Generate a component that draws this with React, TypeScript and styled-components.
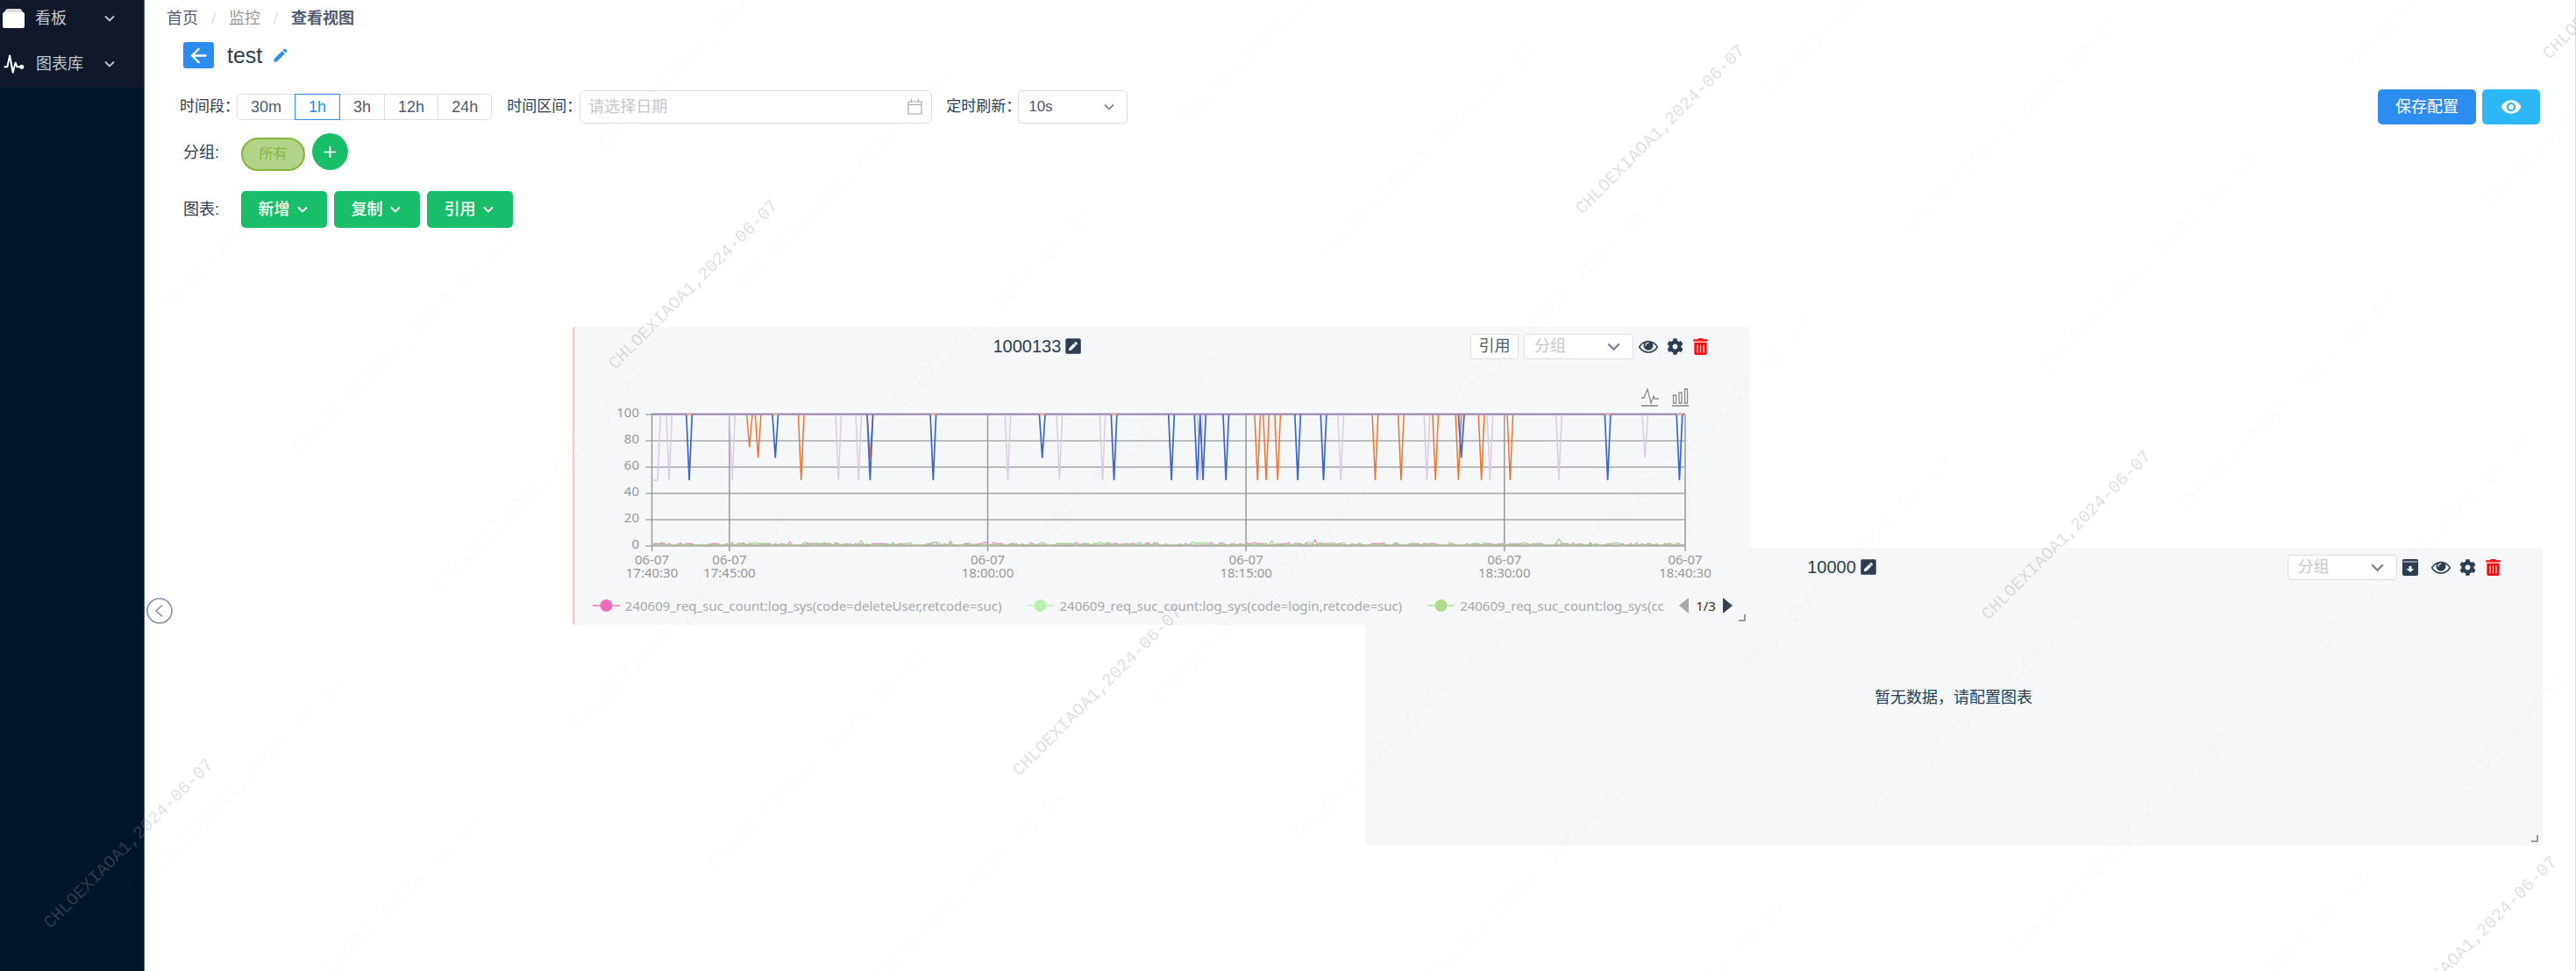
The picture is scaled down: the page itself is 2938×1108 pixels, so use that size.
import React from "react";
import styled, { createGlobalStyle } from "styled-components";
import { IoMdAdd, IoMdArrowBack, IoMdEye, IoMdPulse } from "react-icons/io";
import { MdEdit } from "react-icons/md";
import { FaCog, FaPenSquare, FaTrashAlt } from "react-icons/fa";

const ink = "#2c3e50";
const blue = "#2d8cf0";
const green = "#19be6b";
const line = "#dcdee2";

const GlobalStyle = createGlobalStyle`
  * { box-sizing: border-box; }
  body {
    margin: 0;
    background: #fff;
    color: ${ink};
    font: 18px/24px "Liberation Sans", "Noto Sans CJK SC", sans-serif;
  }
  button, input, select { font: inherit; color: inherit; margin: 0; }
  button { cursor: pointer; }
  svg { display: block; flex: none; }
`;

const Page = styled.div`
  display: flex;
  min-height: 100vh;
  border-right: 1px solid #dcdcdc;
`;

const Sidebar = styled.nav`
  width: 165px;
  flex: none;
  background: #001529;
  border-right: 1px solid #4c6070;
`;

const MenuList = styled.ul`
  margin: 0;
  padding: 0;
  list-style: none;
  background: #101829;
`;

const MenuItem = styled.button`
  display: flex;
  align-items: center;
  width: 100%;
  height: ${(p: { $tall?: boolean }) => (p.$tall ? 58 : 42)}px;
  padding: ${(p: { $tall?: boolean }) => (p.$tall ? 4 : 0)}px 33px 0 3px;
  border: 0;
  background: none;
  color: #c3c6cb;
  gap: 12px;
  text-align: left;
`;

const Grow = styled.span`
  flex: 1;
  white-space: nowrap;
`;

const Main = styled.main`
  position: relative;
  display: flex;
  flex: 1;
  min-width: 0;
  flex-direction: column;
`;

const Breadcrumb = styled.nav`
  display: flex;
  align-items: center;
  height: 40px;
  padding: 2px 0 0 25px;
  gap: 15px;
`;

const Crumb = styled.a`
  color: ${(p: { $muted?: boolean }) => (p.$muted ? "#999" : "#515a6e")};
  text-decoration: none;
`;

const Current = styled.span`
  color: #515a6e;
  font-weight: 700;
`;

const Slash = styled.span`
  color: ${line};
`;

const TitleRow = styled.div`
  display: flex;
  align-items: center;
  height: 48px;
  padding: 0 0 2px 44px;
`;

const BackButton = styled.button`
  display: grid;
  place-items: center;
  width: 35px;
  height: 30px;
  padding: 0;
  border: 0;
  border-radius: 3px;
  background: ${blue};
  color: #fff;
`;

const PageTitle = styled.h1`
  margin: 0 11px 0 15px;
  font-size: 25px;
  font-weight: 400;
  line-height: 30px;
`;

const IconButton = styled.button`
  display: grid;
  place-items: center;
  padding: 0;
  border: 0;
  background: none;
  color: ${(p: { $color?: string }) => p.$color || ink};
`;

const ArchiveButton = styled(IconButton)`
  margin-right: 5px;
`;

const Toolbar = styled.div`
  display: flex;
  align-items: center;
  padding: 14px 40px 10px 40px;
`;

const Label = styled.label`
  font-size: 17px;
  white-space: nowrap;
`;

const ButtonGroup = styled.div`
  display: flex;
  margin: 0 17px 0 -2px;
`;

const RangeButton = styled.button`
  position: relative;
  z-index: ${(p: { $active?: boolean }) => (p.$active ? 1 : 0)};
  height: 30px;
  margin-left: -1px;
  padding: 0 15px;
  border: 1px solid ${(p: { $active?: boolean }) => (p.$active ? blue : line)};
  background: #fff;
  color: ${(p: { $active?: boolean }) => (p.$active ? blue : "#515a6e")};
  line-height: 28px;
  &:first-child { border-radius: 4px 0 0 4px; }
  &:last-child { border-radius: 0 4px 4px 0; }
`;

const DateField = styled.div`
  display: flex;
  align-items: center;
  width: 402px;
  height: 38px;
  margin: 0 16px 0 -2px;
  padding: 0 10px 0 9px;
  border: 1px solid ${line};
  border-radius: 5px;
`;

const DateInput = styled.input`
  flex: 1;
  min-width: 0;
  border: 0;
  padding: 0;
  outline: 0;
  background: none;
  &::placeholder { color: #c5c8ce; opacity: 1; }
`;

const SelectBox = styled.span`
  display: grid;
  align-items: center;
  width: 125px;
  height: ${(p: { $small?: boolean }) => (p.$small ? 29 : 38)}px;
  border: 1px solid ${line};
  border-radius: 4px;
  background: #fff;
  color: #808695;
  > * { grid-area: 1 / 1; }
  > svg { justify-self: end; margin-right: 14px; pointer-events: none; }
`;

const Select = styled.select`
  appearance: none;
  width: 100%;
  height: 100%;
  padding: 0 36px 0 11px;
  border: 0;
  outline: 0;
  background: none;
  color: ${(p: { $empty?: boolean }) => (p.$empty ? "#c5c8ce" : "#515a6e")};
  font-size: ${(p: { $empty?: boolean }) => (p.$empty ? 18 : 17)}px;
`;

const RefreshField = styled.div`
  display: flex;
  align-items: center;
  margin-right: 16px;
  ${SelectBox} { margin-left: -3px; }
`;

const Actions = styled.div`
  display: flex;
  gap: 7px;
  margin-left: auto;
`;

const SolidButton = styled.button`
  display: flex;
  align-items: center;
  justify-content: center;
  gap: 8px;
  height: ${(p: { $bg: string; $h?: number }) => p.$h || 40}px;
  padding: 0 20px;
  border: 0;
  border-radius: 5px;
  background: ${(p: { $bg: string }) => p.$bg};
  color: #fff;
  white-space: nowrap;
`;

const DropButton = styled(SolidButton)`
  width: 98px;
  padding: 0 3px 0 0;
  font-weight: 500;
`;

const FormRow = styled.div`
  display: flex;
  align-items: center;
  height: ${(p: { $h: number }) => p.$h}px;
  padding-left: 44px;
  gap: 8px;
`;

const RowName = styled.span`
  width: 58px;
  font-size: 18px;
`;

const Pill = styled.button`
  align-self: flex-end;
  width: 73px;
  height: 38px;
  padding: 0;
  border: 2px solid #86b53c;
  border-radius: 19px;
  background: #b3d389;
  color: #85b437;
  font-size: 16px;
`;

const AddButton = styled.button`
  display: grid;
  place-items: center;
  width: 41px;
  height: 42px;
  padding: 0;
  align-self: flex-start;
  border: 0;
  border-radius: 50%;
  background: ${green};
  color: #fff;
`;

const Spacer = styled.div`
  height: 23px;
`;

const Canvas = styled.section`
  position: relative;
  flex: 1;
  min-height: 740px;
`;

const Card = styled.article<{ $left: number; $top: number; $edge?: boolean; $front?: boolean }>`
  position: absolute;
  left: ${(p) => p.$left}%;
  top: ${(p) => p.$top}px;
  z-index: ${(p) => (p.$front ? 1 : 0)};
  display: flex;
  flex-direction: column;
  width: 48.45%;
  min-height: 340px;
  border-radius: 4px;
  background: #f5f7f9;
  box-shadow: ${(p) => (p.$edge ? "inset 2px 0 #ffc4c4" : "none")};
`;

const CardHeader = styled.header`
  display: flex;
  align-items: center;
  height: 44px;
  padding: 0 47px 0 43px;
  gap: 6px;
`;

const CardTitle = styled.h2`
  display: flex;
  flex: 1;
  align-items: center;
  justify-content: center;
  margin: 0;
  gap: 4px;
  font-size: 20px;
  font-weight: 400;
`;

const RefButton = styled.button`
  width: 55px;
  height: 29px;
  padding: 0;
  border: 1px solid ${line};
  border-radius: 4px;
  background: #fff;
  color: #515a6e;
`;

const IconRow = styled.div`
  display: flex;
  align-items: center;
  gap: 10px;
`;

const EmptyText = styled.p`
  display: flex;
  flex: 1;
  align-items: center;
  justify-content: center;
  margin: 0;
  padding-bottom: 42px;
`;

const ResizeHandle = styled.span`
  position: absolute;
  right: 5px;
  bottom: 4px;
  width: 8px;
  height: 8px;
  border-right: 2px solid #999;
  border-bottom: 2px solid #999;
`;

const ChartSvg = styled.svg`
  width: 100%;
  height: auto;
  font-family: "Noto Sans", sans-serif;
  font-size: 15px;
`;

const Legend = styled.div`
  display: flex;
  align-items: center;
  height: 44px;
  padding: 0 20px 0 23px;
  color: #aaa;
  font-family: "Noto Sans", sans-serif;
  font-size: 15px;
`;

const LegendList = styled.div`
  display: flex;
  flex: 1;
  min-width: 0;
  margin-right: 12px;
  overflow: hidden;
  gap: 29px;
`;

const LegendItem = styled.span`
  display: flex;
  flex: none;
  align-items: center;
  gap: 6px;
`;

const Pager = styled.div`
  display: flex;
  align-items: center;
  gap: 8px;
  color: #333;
`;

const CollapseButton = styled.button`
  position: absolute;
  left: 2px;
  top: 682px;
  width: 30px;
  height: 30px;
  padding: 0;
  border: 0;
  background: none;
  color: #8791a5;
`;

const Watermarks = styled.div`
  position: fixed;
  inset: 0;
  z-index: 5;
  overflow: hidden;
  pointer-events: none;
`;

const Mark = styled.span<{ $faint?: boolean }>`
  position: absolute;
  transform: translate(-50%, -50%) rotate(-45deg);
  color: ${(p) => (p.$faint ? "rgba(128,128,128,0.025)" : "rgba(150,150,150,0.3)")};
  font: ${(p) => (p.$faint ? 26 : 20)}px "Liberation Mono", monospace;
  white-space: nowrap;
`;

/* ---------- chart ---------- */

const LEFT = 90.5;
const RIGHT = 1269;
const TOP = 56;
const BOTTOM = 206;
const STEPS = 360;

const px = (i: number) => LEFT + ((RIGHT - LEFT) * i) / STEPS;
const py = (v: number) => BOTTOM - ((BOTTOM - TOP) * v) / 100;

type Dip = [number, number];

const half = (...idx: number[]): Dip[] => idx.map((i) => [i, 50]);

const lilacDips: Dip[] = [...half(6, 28, 65, 72, 124, 142, 157, 191, 240, 270, 292, 316), [346, 67]];
const blueDips: Dip[] = [
  ...half(13, 76, 98, 161, 181, 190, 192, 200, 225, 234, 333, 358),
  [43, 67], [136, 67], [282, 67],
];
const orangeDips: Dip[] = [
  ...half(52, 211, 214, 218, 252, 261, 273, 281, 289, 299),
  [34, 75], [37, 67], [76, 67],
];

const dipPath = (dips: Dip[]) =>
  dips
    .map(([i, v]) => `M${px(i - 1)} ${TOP}L${px(i)} ${py(v)}L${px(i + 1)} ${TOP}`)
    .join("");

const noisePath = (seed: number, peaks: Record<number, number>) => {
  let s = seed;
  const pts: string[] = [];
  for (let i = 0; i <= STEPS; i++) {
    s = (s * 1103515245 + 12345) % 2147483648;
    const r = s / 2147483648;
    const v = peaks[i] ?? (r > 0.93 ? 2.6 : r > 0.6 ? 1.8 : 0.3);
    pts.push(`${px(i).toFixed(1)} ${py(v).toFixed(1)}`);
  }
  return "M" + pts.join("L");
};

const pinkNoise = noisePath(77, { 48: 3.4, 116: 3, 231: 5 });
const greenNoise = noisePath(1234, { 73: 4.2, 104: 4, 216: 4, 316: 5.5 });

const ticks: [number, string][] = [
  [0, "17:40:30"],
  [27, "17:45:00"],
  [117, "18:00:00"],
  [207, "18:15:00"],
  [297, "18:30:00"],
  [360, "18:40:30"],
];

function Chart() {
  return (
    <ChartSvg viewBox="0 0 1343 252" role="img" aria-label="1000133">
      {[0, 20, 40, 60, 80, 100].map((v) => (
        <g key={v}>
          <path d={`M${LEFT - 7} ${py(v)}H${RIGHT}`} stroke="#a9a9ab" strokeWidth="1.5" />
          <text x="76" y={py(v) + 3} textAnchor="end" fill="#999">{v}</text>
        </g>
      ))}
      {ticks.map(([i, t]) => (
        <g key={t}>
          <path d={`M${px(i)} ${TOP}V${BOTTOM + 6}`} stroke="#9a9a9c" strokeWidth="1.5" />
          <text x={px(i)} y="227" textAnchor="middle" fill="#999">06-07</text>
          <text x={px(i)} y="242" textAnchor="middle" fill="#999">{t}</text>
        </g>
      ))}
      <g fill="none" strokeWidth="1.5" strokeLinejoin="bevel">
        <path d={`M${LEFT} ${py(50)}H${px(2)}L${px(3)} ${TOP}${dipPath(lilacDips)}`} stroke="#dccbe4" />
        <path d={dipPath(orangeDips)} stroke="#f5712f" />
        <path d={dipPath(blueDips)} stroke="#3c66cf" strokeWidth="1.7" />
        <path d={`M${LEFT} ${TOP - 0.5}H${RIGHT}`} stroke="#a08bb4" strokeWidth="2.2" />
        <path
          d={[13, 43, 98, 136, 161, 333, 358].map((i) => `M${px(i) - 3} ${TOP - 0.5}h6`).join("")}
          stroke="#f9b48c"
          strokeWidth="2.2"
        />
        <path d={pinkNoise} stroke="#e58cc6" strokeWidth="1.2" />
        <path d={greenNoise} stroke="#a9d596" strokeWidth="1.4" />
        <path d={`M${LEFT} ${BOTTOM - 1}H${RIGHT}`} stroke="#a8b99a" strokeWidth="1.4" />
      </g>
      <g fill="none" stroke="#8c8c8c" strokeWidth="1.3">
        <path d="M1219 37h3l4-10 4 16 3-8 1 3h5" />
        <path d="M1219 46h19M1254 46h19" strokeWidth="2" stroke="#a0a0a0" />
        <path d="M1255.500 43v-9h3v9zM1262 43V31h3v12zM1268.500 43V27h3v16z" />
      </g>
    </ChartSvg>
  );
}

function LegendEntry({ color, text }: { color: string; text: string }) {
  return (
    <LegendItem>
      <svg width="31" height="16" viewBox="0 0 31 16">
        <path d="M0 8H31" stroke={color} strokeWidth="2" opacity="0.7" />
        <circle cx="15.500" cy="8" r="7" fill={color} />
      </svg>
      {text}
    </LegendItem>
  );
}

function Chevron({ size }: { size: number }) {
  return (
    <svg width={size} height={size} viewBox="0 0 12 12" fill="none" stroke="currentColor" strokeWidth="1.8">
      <path d="M1 3.500l5 5 5-5" />
    </svg>
  );
}

function ArchiveIcon() {
  return (
    <svg width="18" height="19" viewBox="0 0 18 19">
      <rect width="18" height="19" rx="2" fill={ink} />
      <path d="M1 3h16" stroke="#c4cbd2" strokeWidth="1.2" />
      <path d="M7.500 8h3v3h3L9 15l-4.500-4h3z" fill="#f5f7f9" />
    </svg>
  );
}

function EyeIcon() {
  return (
    <svg width="22" height="22" viewBox="0 0 1792 1792" fill="currentColor">
      <path d="M1664 960q-152-236-381-353 61 104 61 225 0 185-131.500 316.500t-316.500 131.500-316.500-131.500-131.500-316.500q0-121 61-225-229 117-381 353 133 205 333.500 326.500t434.500 121.500 434.500-121.500 333.500-326.500zm-720-384q0-20-14-34t-34-14q-125 0-214.500 89.500t-89.500 214.500q0 20 14 34t34 14 34-14 14-34q0-86 61-147t147-61q20 0 34-14t14-34zm848 384q0 34-20 69-140 230-376.500 368.500t-499.500 138.500-499.500-139-376.500-368q-20-35-20-69t20-69q140-229 376.500-368t499.500-139 499.500 139 376.500 368q20 35 20 69z" />
    </svg>
  );
}

function GroupSelect() {
  return (
    <SelectBox $small>
      <Select $empty defaultValue="" aria-label="分组">
        <option value="">分组</option>
      </Select>
      <Chevron size={15} />
    </SelectBox>
  );
}

function CardIcons({ archive }: { archive?: boolean }) {
  return (
    <IconRow>
      {archive && (
        <ArchiveButton aria-label="archive"><ArchiveIcon /></ArchiveButton>
      )}
      <IconButton aria-label="view"><EyeIcon /></IconButton>
      <IconButton aria-label="settings"><FaCog size={19} /></IconButton>
      <IconButton aria-label="delete" $color="#fe0c0c"><FaTrashAlt size={19} /></IconButton>
    </IconRow>
  );
}

const darkMarks = [
  [147, 963], [791, 325], [1252, 789], [1894, 148], [2357, 611], [2820, 1074], [2997, -29],
];

const faintMarks: number[][] = [];
for (let b = -6; b <= 3; b++) {
  for (let a = -12; a <= 12; a++) {
    const x = 2262 + 158 * a + 506 * b;
    const y = 805 + 158 * a - 189 * b;
    if (x > 250 && x < 2960 && y > -60 && y < 1160) faintMarks.push([x, y]);
  }
}

const ranges = ["30m", "1h", "3h", "12h", "24h"];

export default function App() {
  return (
    <Page>
      <GlobalStyle />
      <Sidebar>
        <MenuList>
          <li>
            <MenuItem>
              <svg width="25" height="24" viewBox="0 0 25 24">
                <path d="M3 3q1-2 3-2h13q2 0 3 2l2 3H1z" fill="#dcdcdc" />
                <rect y="5" width="25" height="18" rx="2" fill="#fff" />
              </svg>
              <Grow>看板</Grow>
              <Chevron size={12} />
            </MenuItem>
          </li>
          <li>
            <MenuItem $tall>
              <IoMdPulse size={26} color="#fff" />
              <Grow>图表库</Grow>
              <Chevron size={12} />
            </MenuItem>
          </li>
        </MenuList>
      </Sidebar>

      <Main>
        <Breadcrumb>
          <Crumb href="#home">首页</Crumb>
          <Slash>/</Slash>
          <Crumb href="#monitor" $muted>监控</Crumb>
          <Slash>/</Slash>
          <Current>查看视图</Current>
        </Breadcrumb>

        <TitleRow>
          <BackButton aria-label="back"><IoMdArrowBack size={27} /></BackButton>
          <PageTitle>test</PageTitle>
          <IconButton aria-label="edit" $color={blue}><MdEdit size={20} /></IconButton>
        </TitleRow>

        <Toolbar>
          <Label as="span">时间段：</Label>
          <ButtonGroup>
            {ranges.map((r) => (
              <RangeButton key={r} $active={r === "1h"}>{r}</RangeButton>
            ))}
          </ButtonGroup>
          <Label htmlFor="date-range">时间区间：</Label>
          <DateField>
            <DateInput id="date-range" placeholder="请选择日期" />
            <svg width="17" height="18" viewBox="0 0 17 18" fill="none" stroke="#a3a8b3" strokeWidth="1.2">
              <path d="M1 3h15v14H1zM1 6.500h15M4.500 0v4M12.500 0v4" />
            </svg>
          </DateField>
          <RefreshField>
            <Label htmlFor="refresh">定时刷新：</Label>
            <SelectBox>
              <Select id="refresh" defaultValue="10s">
                <option>10s</option>
              </Select>
              <Chevron size={12} />
            </SelectBox>
          </RefreshField>
          <Actions>
            <SolidButton $bg={blue}>保存配置</SolidButton>
            <SolidButton $bg="#2db7f5" aria-label="preview"><IoMdEye size={26} /></SolidButton>
          </Actions>
        </Toolbar>

        <FormRow $h={43}>
          <RowName>分组:</RowName>
          <Pill>所有</Pill>
          <AddButton aria-label="add"><IoMdAdd size={21} /></AddButton>
        </FormRow>
        <Spacer />
        <FormRow $h={42}>
          <RowName>图表:</RowName>
          {["新增", "复制", "引用"].map((t) => (
            <DropButton key={t} $bg={green} $h={42}>
              {t}
              <Chevron size={12} />
            </DropButton>
          ))}
        </FormRow>

        <Canvas>
          <Card $left={17.6} $top={113} $edge $front>
            <CardHeader>
              <CardTitle>
                1000133
                <IconButton aria-label="rename"><FaPenSquare size={20} /></IconButton>
              </CardTitle>
              <RefButton>引用</RefButton>
              <GroupSelect />
              <CardIcons />
            </CardHeader>
            <Chart />
            <Legend>
              <LegendList>
                <LegendEntry color="#ee6cbb" text="240609_req_suc_count:log_sys(code=deleteUser,retcode=suc)" />
                <LegendEntry color="#b8f2b0" text="240609_req_suc_count:log_sys(code=login,retcode=suc)" />
                <LegendEntry color="#aedc8c" text="240609_req_suc_count:log_sys(cc" />
              </LegendList>
              <Pager>
                <IconButton aria-label="previous" $color="#aaa">
                  <svg width="11" height="18" viewBox="0 0 11 18" fill="currentColor"><path d="M11 0v18L0 9z" /></svg>
                </IconButton>
                1/3
                <IconButton aria-label="next" $color="#2f4554">
                  <svg width="11" height="18" viewBox="0 0 11 18" fill="currentColor"><path d="M0 0v18l11-9z" /></svg>
                </IconButton>
              </Pager>
            </Legend>
            <ResizeHandle />
          </Card>

          <Card $left={50.2} $top={365}>
            <CardHeader>
              <CardTitle>
                10000
                <IconButton aria-label="rename"><FaPenSquare size={20} /></IconButton>
              </CardTitle>
              <GroupSelect />
              <CardIcons archive />
            </CardHeader>
            <EmptyText>暂无数据，请配置图表</EmptyText>
            <ResizeHandle />
          </Card>
        </Canvas>

        <CollapseButton aria-label="collapse">
          <svg width="30" height="30" viewBox="0 0 30 30" fill="none" stroke="currentColor" strokeWidth="1.6">
            <circle cx="15" cy="15" r="14" />
            <path d="M18 8.500L11 15l7 6.500" />
          </svg>
        </CollapseButton>
      </Main>

      <Watermarks aria-hidden="true">
        {faintMarks.map(([x, y]) => (
          <Mark key={`f${x}-${y}`} $faint style={{ left: x, top: y }}>CHLOEXIAOA1,2024-06-07</Mark>
        ))}
        {darkMarks.map(([x, y]) => (
          <Mark key={`d${x}-${y}`} style={{ left: x, top: y }}>CHLOEXIAOA1,2024-06-07</Mark>
        ))}
      </Watermarks>
    </Page>
  );
}
